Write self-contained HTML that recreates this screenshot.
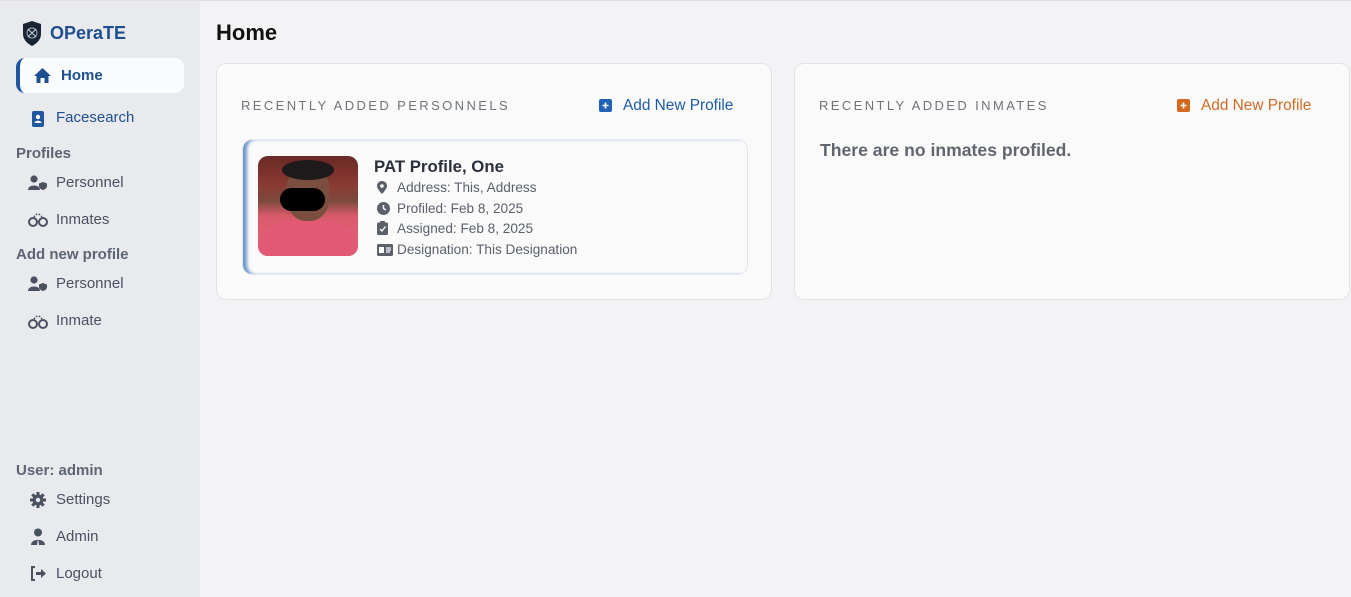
<!DOCTYPE html>
<html><head><meta charset="utf-8"><style>
*{margin:0;padding:0;box-sizing:border-box}
body{width:1351px;height:596px;overflow:hidden;background:#f3f3f5;font-family:"Liberation Sans",sans-serif;position:relative;border-top:1px solid #e0e0e3}
.sb{position:absolute;left:0;top:0;width:200px;height:596px;background:#e9eaee}
.abs{position:absolute}
.t{color:#4b5160;font-size:15px}
.h{color:#5d6472;font-size:15px;font-weight:bold}
.ic{position:absolute;left:28px}
.card{position:absolute;background:#fafafb;border:1px solid #e2e3e7;border-radius:10px}
.lbl{position:absolute;font-size:13px;letter-spacing:2.4px;color:#6e737c}
</style></head><body>
<div class="sb">
 <svg class="abs" style="left:21px;top:19px" width="22" height="27" viewBox="0 0 22 27"><path d="M11 1 L20 4 V14 C20 20 15 24 11 26 C7 24 2 20 2 14 V4 Z" fill="#1a2433"/><circle cx="11" cy="13" r="5" fill="none" stroke="#9fb0c8" stroke-width="1"/><path d="M7 9 L15 17 M15 9 L7 17" stroke="#c8d2e0" stroke-width="1"/></svg>
 <div class="abs" style="left:50px;top:22px;font-size:18px;font-weight:bold;color:#1e4f8f">OPeraTE</div>
 <div class="abs" style="left:16px;top:57px;width:168px;height:35px;background:#fafbfc;border-radius:9px;border-left:4px solid #1e57a0"></div>
 <svg class="abs" style="left:33px;top:66px" width="19" height="17" viewBox="0 0 19 17"><path d="M9.5 1 L18 9 H15.5 V16 H11.5 V11 H7.5 V16 H3.5 V9 H1 Z" fill="#1e4f8f"/></svg>
 <div class="abs" style="left:61px;top:66px;font-size:15px;font-weight:bold;color:#1e4f8f">Home</div>
 <svg class="abs" style="left:32px;top:110px" width="12" height="16" viewBox="0 0 12 16"><rect x="0" y="0" width="12" height="16" rx="2" fill="#1e57a0"/><circle cx="6" cy="6" r="2.2" fill="#fff"/><path d="M2.5 12 C2.5 9 9.5 9 9.5 12 Z" fill="#fff"/></svg>
 <div class="abs" style="left:56px;top:108px;font-size:15px;color:#1e4f8f">Facesearch</div>
 <div class="abs h" style="left:16px;top:144px">Profiles</div>
 <svg class="ic" style="top:174px" width="20" height="16" viewBox="0 0 20 16"><circle cx="6" cy="4" r="3.6" fill="#4b5160"/><path d="M0 15 C0 9 12 9 12 15 Z" fill="#4b5160"/><path d="M15 7 L19 8.5 V11 C19 13 17 14.5 15 15 C13 14.5 11 13 11 11 V8.5 Z" fill="#4b5160"/></svg>
 <div class="abs t" style="left:56px;top:173px">Personnel</div>
 <svg class="ic" style="top:210px" width="20" height="16" viewBox="0 0 20 16"><circle cx="5" cy="11" r="4" fill="none" stroke="#4b5160" stroke-width="2"/><circle cx="15" cy="11" r="4" fill="none" stroke="#4b5160" stroke-width="2"/><path d="M6 6 Q10 0 14 6" fill="none" stroke="#4b5160" stroke-width="1.5" stroke-dasharray="1.5 1.5"/></svg>
 <div class="abs t" style="left:56px;top:210px">Inmates</div>
 <div class="abs h" style="left:16px;top:245px">Add new profile</div>
 <svg class="ic" style="top:275px" width="20" height="16" viewBox="0 0 20 16"><circle cx="6" cy="4" r="3.6" fill="#4b5160"/><path d="M0 15 C0 9 12 9 12 15 Z" fill="#4b5160"/><path d="M15 7 L19 8.5 V11 C19 13 17 14.5 15 15 C13 14.5 11 13 11 11 V8.5 Z" fill="#4b5160"/></svg>
 <div class="abs t" style="left:56px;top:274px">Personnel</div>
 <svg class="ic" style="top:312px" width="20" height="16" viewBox="0 0 20 16"><circle cx="5" cy="11" r="4" fill="none" stroke="#4b5160" stroke-width="2"/><circle cx="15" cy="11" r="4" fill="none" stroke="#4b5160" stroke-width="2"/><path d="M6 6 Q10 0 14 6" fill="none" stroke="#4b5160" stroke-width="1.5" stroke-dasharray="1.5 1.5"/></svg>
 <div class="abs t" style="left:56px;top:311px">Inmate</div>
 <div class="abs h" style="left:16px;top:461px">User: admin</div>
 <svg class="abs" style="left:30px;top:491px" width="16" height="16" viewBox="0 0 16 16"><circle cx="8" cy="8" r="5.5" fill="#4b5160"/><g stroke="#4b5160" stroke-width="3"><path d="M8 0V16M0 8H16M2.3 2.3L13.7 13.7M13.7 2.3L2.3 13.7"/></g><circle cx="8" cy="8" r="2.2" fill="#e9eaee"/></svg>
 <div class="abs t" style="left:56px;top:490px">Settings</div>
 <svg class="abs" style="left:31px;top:527px" width="14" height="17" viewBox="0 0 14 17"><circle cx="7" cy="4.5" r="4" fill="#4b5160"/><path d="M0 17 C0 10 14 10 14 17 Z" fill="#4b5160"/><path d="M7 10 L6 17 H8 Z" fill="#e9eaee"/></svg>
 <div class="abs t" style="left:56px;top:527px">Admin</div>
 <svg class="abs" style="left:30px;top:565px" width="17" height="15" viewBox="0 0 17 15"><path d="M5 1 H2 V14 H5" fill="none" stroke="#4b5160" stroke-width="2"/><path d="M6 6 H11 V3 L16 7.5 L11 12 V9 H6 Z" fill="#4b5160"/></svg>
 <div class="abs t" style="left:56px;top:564px">Logout</div>
</div>

<div class="abs" style="left:216px;top:19px;font-size:22px;font-weight:bold;color:#111">Home</div>

<div class="card" style="left:216px;top:62px;width:556px;height:237px">
 <div class="lbl" style="left:24px;top:34px">RECENTLY ADDED PERSONNELS</div>
 <svg class="abs" style="left:382px;top:35px" width="13" height="13"><rect width="13" height="13" rx="2" fill="#1e63b8"/><path d="M6.5 3.5V9.5M3.5 6.5H9.5" stroke="#fff" stroke-width="1.6"/></svg>
 <div class="abs" style="left:406px;top:33px;font-size:15.4px;color:#1e5ba6">Add New Profile</div>
 <div class="abs" style="left:25px;top:75px;width:506px;height:136px;background:#fafafb;border:1px solid #e6e7ea;border-radius:10px;box-shadow:inset 5px 0 3px -1px #6d98cc"></div>
 <div class="abs" style="left:41px;top:92px;width:100px;height:100px;border-radius:10px;overflow:hidden;background:linear-gradient(180deg,#6a2a25 0%,#8a3a33 30%,#7d4a3e 45%,#d95a6a 60%,#e5637a 100%)">
  <div class="abs" style="left:28px;top:10px;width:44px;height:55px;border-radius:45%;background:#7a4f40"></div>
  <div class="abs" style="left:24px;top:4px;width:52px;height:20px;border-radius:50%;background:#1f1a1c"></div>
  <div class="abs" style="left:22px;top:32px;width:45px;height:23px;border-radius:12px;background:#000"></div>
  <div class="abs" style="left:0;top:65px;width:100px;height:40px;border-radius:30px 30px 0 0;background:#e25a74"></div>
 </div>
 <div class="abs" style="left:157px;top:93px;font-size:16.8px;font-weight:bold;color:#2b303b">PAT Profile, One</div>
 <div class="abs" style="left:160px;top:116px;width:14px;font-size:12px;color:#5b606b;line-height:20.5px">
  <svg width="10" height="13" viewBox="0 0 10 13"><path d="M5 0C2 0 0 2.2 0 5C0 8 5 13 5 13S10 8 10 5C10 2.2 8 0 5 0Z" fill="#5b606b"/><circle cx="5" cy="5" r="1.8" fill="#fafafb"/></svg><br>
  <svg width="13" height="13" viewBox="0 0 13 13"><circle cx="6.5" cy="6.5" r="6.5" fill="#5b606b"/><path d="M6.5 3V6.5L9 8" stroke="#fafafb" stroke-width="1.5" fill="none"/></svg><br>
  <svg width="11" height="14" viewBox="0 0 11 14"><rect y="1.5" width="11" height="12.5" rx="1.5" fill="#5b606b"/><rect x="3" y="0" width="5" height="3" rx="1" fill="#5b606b"/><path d="M3 8L5 10L8.5 5.5" stroke="#fafafb" stroke-width="1.4" fill="none"/></svg><br>
  <svg width="16" height="12" viewBox="0 0 16 12"><rect width="16" height="12" rx="1.5" fill="#5b606b"/><rect x="2" y="3" width="5" height="6" fill="#fafafb"/><path d="M9 4H14M9 6H14M9 8H13" stroke="#fafafb" stroke-width="1.2"/></svg>
 </div>
 <div class="abs" style="left:180px;top:114px;font-size:13.6px;color:#5b606b;line-height:20.5px">Address: This, Address<br>Profiled: Feb 8, 2025<br>Assigned: Feb 8, 2025<br>Designation: This Designation</div>
</div>

<div class="card" style="left:794px;top:62px;width:556px;height:237px">
 <div class="lbl" style="left:24px;top:34px">RECENTLY ADDED INMATES</div>
 <svg class="abs" style="left:382px;top:35px" width="13" height="13"><rect width="13" height="13" rx="2" fill="#d2691e"/><path d="M6.5 3.5V9.5M3.5 6.5H9.5" stroke="#fff" stroke-width="1.6"/></svg>
 <div class="abs" style="left:406px;top:33px;font-size:15.4px;color:#d06a25">Add New Profile</div>
 <div class="abs" style="left:25px;top:76px;font-size:17.6px;font-weight:bold;color:#61656f">There are no inmates profiled.</div>
</div>
</body></html>
